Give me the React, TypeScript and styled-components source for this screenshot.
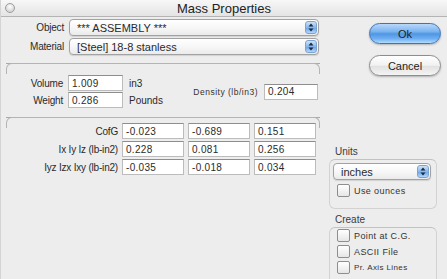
import React from 'react';
import styled, { createGlobalStyle } from 'styled-components';

const GlobalStyle = createGlobalStyle`
  html, body {
    margin: 0;
    padding: 0;
    background: #ededed;
  }
  * {
    box-sizing: border-box;
  }
`;

const Window = styled.div`
  width: 447px;
  height: 279px;
  overflow: hidden;
  display: flex;
  flex-direction: column;
  background: #ededed;
  font-family: 'Liberation Sans', Arial, sans-serif;
  font-size: 10px;
  color: #1a1a1a;
  border-left: 1px solid #d4d4d4;
`;

const TitleBar = styled.div`
  height: 17px;
  flex: none;
  display: flex;
  align-items: center;
  padding-left: 4px;
  background: linear-gradient(to bottom, #f7f7f7, #e4e4e4);
  border-bottom: 1px solid #b4b4b4;
`;

const CloseDot = styled.div`
  width: 10px;
  height: 10px;
  border-radius: 50%;
  border: 1px solid #9c9c9c;
  background: radial-gradient(circle at 50% 35%, #ffffff, #d6d6d6 70%);
`;

const Title = styled.div`
  flex: 1;
  text-align: center;
  font-size: 13px;
  margin-right: 14px;
  color: #222;
`;

const Body = styled.div`
  flex: 1;
  display: flex;
`;

const LeftCol = styled.div`
  width: 320px;
  padding: 2px 0 0 5px;
  display: flex;
  flex-direction: column;
`;

const PopupRows = styled.div`
  display: flex;
  flex-direction: column;
  gap: 2px;
`;

const Row = styled.div`
  display: flex;
  align-items: center;
`;

const Label = styled.div<{ $w: number }>`
  width: ${({ $w }) => $w}px;
  padding-right: 5px;
  text-align: right;
  letter-spacing: -0.2px;
  white-space: nowrap;
  color: #2a2a2a;
`;

const Popup = styled.div<{ $w: number }>`
  width: ${({ $w }) => $w}px;
  height: 17px;
  display: flex;
  align-items: center;
  padding-left: 7px;
  border: 1px solid #a2a2a2;
  border-radius: 4px;
  background: linear-gradient(to bottom, #ffffff 0%, #f7f7f7 50%, #ebebeb 100%);
  box-shadow: 0 1px 1px rgba(0, 0, 0, 0.12);
  font-size: 11px;
  color: #2a2a2a;
`;

const PopupText = styled.span`
  flex: 1;
  white-space: nowrap;
`;

const Stepper = styled.div`
  width: 12px;
  height: 13px;
  margin-right: 1px;
  border-radius: 3px;
  display: flex;
  align-items: center;
  justify-content: center;
  background: linear-gradient(to bottom, #cfe3fa 0%, #86b7ee 50%, #6aa5ea 55%, #b5d6fa 100%);
  border: 1px solid #7aa3d4;
`;

const Group = styled.div<{ $top: number }>`
  position: relative;
  margin-top: ${({ $top }) => $top}px;
  width: 314px;
  border-top: 1px solid #a9a9a9;

  &::before {
    content: '';
    position: absolute;
    top: -1px;
    left: 0;
    right: 0;
    height: 10px;
    border: 1px solid #b4b4b4;
    border-bottom: none;
    border-radius: 6px 6px 0 0;
  }
`;

const MassSection = styled.div`
  height: 53px;
  display: flex;
  align-items: center;
  padding-top: 2px;
`;

const MassRows = styled.div`
  display: flex;
  flex-direction: column;
  gap: 1px;
`;

const Input = styled.div<{ $w: number }>`
  width: ${({ $w }) => $w}px;
  height: 16px;
  display: flex;
  align-items: center;
  padding-left: 3px;
  background: #ffffff;
  border: 1px solid #bcbcbc;
  border-top-color: #8e8e8e;
  font-size: 10px;
  letter-spacing: 0.3px;
  color: #2a2a2a;
`;

const Unit = styled.div`
  margin-left: 6px;
  color: #2a2a2a;
`;

const Density = styled.div`
  margin-left: auto;
  margin-right: 2px;
  display: flex;
  align-items: center;
  gap: 6px;
`;

const SmallLabel = styled.div`
  font-size: 8.5px;
  letter-spacing: 0.5px;
  color: #333;
`;

const MomentGrid = styled.div`
  display: grid;
  grid-template-columns: 113px 62px 62px 62px;
  column-gap: 4px;
  row-gap: 2px;
  align-items: center;
  padding-top: 5px;
  margin-left: -1px;
`;

const GridLabel = styled.div`
  text-align: right;
  white-space: nowrap;
  letter-spacing: -0.2px;
  color: #2a2a2a;
`;

const RightCol = styled.div`
  flex: 1;
  display: flex;
  flex-direction: column;
  padding: 6px 6px 0 8px;
`;

const Buttons = styled.div`
  align-self: flex-end;
  display: flex;
  flex-direction: column;
  gap: 11px;
`;

const Button = styled.div<{ $primary?: boolean }>`
  width: 72px;
  height: 21px;
  border-radius: 11px;
  display: flex;
  align-items: center;
  justify-content: center;
  font-size: 11px;
  color: #1e1e1e;
  border: 1px solid ${({ $primary }) => ($primary ? '#3f74b8' : '#8d8d8d')};
  background: ${({ $primary }) =>
    $primary
      ? 'linear-gradient(to bottom, #b9d8fa 0%, #7ab3f0 40%, #4f96e4 52%, #6fb0f2 78%, #b2dcff 100%)'
      : 'linear-gradient(to bottom, #ffffff 0%, #f2f2f2 48%, #e2e2e2 55%, #f4f4f4 100%)'};
  box-shadow: 0 1px 2px rgba(0, 0, 0, 0.25);
`;

const SideLabel = styled.div<{ $top: number }>`
  margin-top: ${({ $top }) => $top}px;
  margin-left: 6px;
  font-size: 10px;
  color: #3a3a3a;
`;

const SideBox = styled.div<{ $h: number; $gap: number; $pad: number }>`
  height: ${({ $h }) => $h}px;
  margin-top: 2px;
  margin-right: 4px;
  border: 1px solid #d2d2d2;
  border-top-color: #c2c2c2;
  border-radius: 6px;
  padding: ${({ $pad }) => $pad}px 3px 0 3px;
  display: flex;
  flex-direction: column;
  gap: ${({ $gap }) => $gap}px;
`;

const CheckRow = styled.div`
  display: flex;
  align-items: center;
  gap: 4px;
  padding-left: 4px;
`;

const Checkbox = styled.div`
  width: 13px;
  height: 13px;
  border: 1px solid #8e8e8e;
  border-radius: 2px;
  background: linear-gradient(to bottom, #ffffff, #e6e6e6);
`;

const CheckText = styled.div<{ $size?: number }>`
  font-size: ${({ $size }) => $size ?? 9}px;
  letter-spacing: 0.4px;
  color: #333;
`;

const StepIcon = () => (
  <svg width="6" height="9" viewBox="0 0 6 9">
    <path d="M3 0.5 L5.5 3.5 L0.5 3.5 Z" fill="#1d2a3a" />
    <path d="M3 8.5 L5.5 5.5 L0.5 5.5 Z" fill="#1d2a3a" />
  </svg>
);

const moments = [
  { label: 'CofG', values: ['-0.023', '-0.689', '0.151'] },
  { label: 'Ix Iy Iz (lb-in2)', values: ['0.228', '0.081', '0.256'] },
  { label: 'Iyz Izx Ixy (lb-in2)', values: ['-0.035', '-0.018', '0.034'] },
];

const creates = [
  { label: 'Point at C.G.', size: 9 },
  { label: 'ASCII File', size: 9 },
  { label: 'Pr. Axis Lines', size: 8 },
];

const App = () => {
  return (
    <Window>
      <GlobalStyle />
      <TitleBar>
        <CloseDot />
        <Title>Mass Properties</Title>
      </TitleBar>
      <Body>
        <LeftCol>
          <PopupRows>
            <Row>
              <Label $w={63}>Object</Label>
              <Popup $w={250}>
                <PopupText>*** ASSEMBLY ***</PopupText>
                <Stepper><StepIcon /></Stepper>
              </Popup>
            </Row>
            <Row>
              <Label $w={63}>Material</Label>
              <Popup $w={250}>
                <PopupText>[Steel] 18-8 stanless</PopupText>
                <Stepper><StepIcon /></Stepper>
              </Popup>
            </Row>
          </PopupRows>

          <Group $top={8}>
            <MassSection>
              <MassRows>
                <Row>
                  <Label $w={62}>Volume</Label>
                  <Input $w={55}>1.009</Input>
                  <Unit>in3</Unit>
                </Row>
                <Row>
                  <Label $w={62}>Weight</Label>
                  <Input $w={55}>0.286</Input>
                  <Unit>Pounds</Unit>
                </Row>
              </MassRows>
              <Density>
                <SmallLabel>Density (lb/in3)</SmallLabel>
                <Input $w={54}>0.204</Input>
              </Density>
            </MassSection>
          </Group>

          <Group $top={0}>
            <MomentGrid>
              {moments.map((m) => (
                <React.Fragment key={m.label}>
                  <GridLabel>{m.label}</GridLabel>
                  {m.values.map((v, i) => (
                    <Input key={i} $w={62}>{v}</Input>
                  ))}
                </React.Fragment>
              ))}
            </MomentGrid>
          </Group>
        </LeftCol>

        <RightCol>
          <Buttons>
            <Button $primary>Ok</Button>
            <Button>Cancel</Button>
          </Buttons>

          <SideLabel $top={70}>Units</SideLabel>
          <SideBox $h={50} $gap={4} $pad={3}>
            <Popup $w={98}>
              <PopupText>inches</PopupText>
              <Stepper><StepIcon /></Stepper>
            </Popup>
            <CheckRow>
              <Checkbox />
              <CheckText>Use ounces</CheckText>
            </CheckRow>
          </SideBox>

          <SideLabel $top={5}>Create</SideLabel>
          <SideBox $h={70} $gap={3} $pad={1}>
            {creates.map((c) => (
              <CheckRow key={c.label}>
                <Checkbox />
                <CheckText $size={c.size}>{c.label}</CheckText>
              </CheckRow>
            ))}
          </SideBox>
        </RightCol>
      </Body>
    </Window>
  );
};

export default App;
